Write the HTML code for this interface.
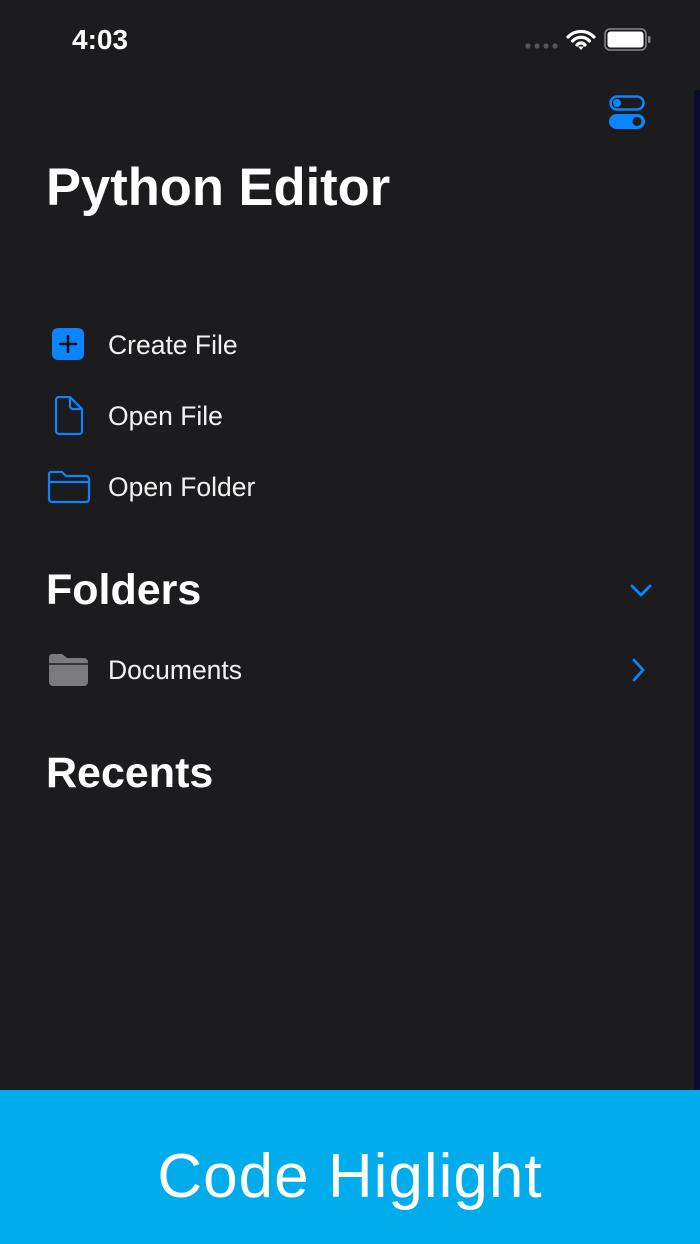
<!DOCTYPE html>
<html><head><meta charset="utf-8"><style>
*{margin:0;padding:0;box-sizing:border-box}
body{width:700px;height:1244px;background:#1c1c1e;position:relative;overflow:hidden;font-family:"Liberation Sans",sans-serif;color:#fff}
.strip{position:absolute;left:694px;top:90px;width:6px;height:1000px;background:#0b0a33}
.t{position:absolute;white-space:nowrap}
.item{position:absolute;left:108px;font-size:26.5px;color:#f2f2f2}
.h{position:absolute;left:46px;font-weight:bold;font-size:43px}
.banner{position:absolute;left:0;top:1090px;width:700px;height:154px;background:#00aceb;text-align:center;font-size:62px;padding-top:50px;line-height:74px;color:#fff;letter-spacing:1px}
svg{position:absolute}
</style></head><body>
<div class="strip"></div>
<div class="t" style="left:72px;top:24px;font-size:28px;font-weight:bold">4:03</div>
<svg style="left:525px;top:43px" width="34" height="6"><circle cx="3" cy="3" r="2.6" fill="#555"/><circle cx="12" cy="3" r="2.6" fill="#555"/><circle cx="21" cy="3" r="2.6" fill="#555"/><circle cx="30" cy="3" r="2.6" fill="#555"/></svg>
<svg style="left:566px;top:28px" width="30" height="22" viewBox="0 0 30 22"><path d="M2 9a18 18 0 0 1 26 0M6.5 13a11.5 11.5 0 0 1 17 0M11 17a5 5 0 0 1 8 0" stroke="#fff" stroke-width="3.2" fill="none" stroke-linecap="round"/><path d="M12 18.5L15 22L18 18.5z" fill="#fff"/></svg>
<svg style="left:604px;top:28px" width="48" height="24"><rect x="1" y="1" width="41" height="21" rx="5" fill="none" stroke="#888" stroke-width="1.5"/><rect x="3.5" y="3.5" width="36" height="16" rx="3" fill="#fff"/><rect x="44" y="8" width="2.5" height="7" rx="1" fill="#888"/></svg>
<svg style="left:609px;top:95px" width="36" height="34"><rect x="1.5" y="1.5" width="33" height="13" rx="6.5" fill="none" stroke="#0a84ff" stroke-width="2.5"/><circle cx="8" cy="8" r="4" fill="#0a84ff"/><rect x="0" y="19" width="36" height="15" rx="7.5" fill="#0a84ff"/><circle cx="28" cy="26.5" r="4.5" fill="#1c1c1e"/></svg>
<div class="t" style="left:46px;top:157px;font-size:52.5px;font-weight:bold">Python Editor</div>
<svg style="left:52px;top:328px" width="32" height="32"><rect width="32" height="32" rx="6" fill="#0a84ff"/><path d="M16 8v16M8 16h16" stroke="#111" stroke-width="2.6" stroke-linecap="round"/></svg>
<div class="item" style="top:330px">Create File</div>
<svg style="left:53px;top:396px" width="32" height="40"><path d="M3 4a3 3 0 0 1 3-3h11l12 12v22a3 3 0 0 1-3 3H6a3 3 0 0 1-3-3z" fill="none" stroke="#0a84ff" stroke-width="2.2"/><path d="M17 1v9a3 3 0 0 0 3 3h9" fill="none" stroke="#0a84ff" stroke-width="2.2"/></svg>
<div class="item" style="top:401px">Open File</div>
<svg style="left:47px;top:470px" width="44" height="34"><path d="M2 4a2 2 0 0 1 2-2h11l4 4h20a3 3 0 0 1 3 3v20a3 3 0 0 1-3 3H5a3 3 0 0 1-3-3z" fill="none" stroke="#0a84ff" stroke-width="2.2"/><path d="M2 12h40" stroke="#0a84ff" stroke-width="2.2"/></svg>
<div class="item" style="top:472px">Open Folder</div>
<div class="h" style="top:566px">Folders</div>
<svg style="left:630px;top:584px" width="22" height="14"><path d="M2 2l9 9 9-9" fill="none" stroke="#0a84ff" stroke-width="2.8" stroke-linecap="round" stroke-linejoin="round"/></svg>
<svg style="left:47px;top:653px" width="43" height="34"><path d="M2 4a3 3 0 0 1 3-3h10l5 4h17a4 4 0 0 1 4 4v20a4 4 0 0 1-4 4H6a4 4 0 0 1-4-4z" fill="#7b7b7f"/><path d="M2 11h41" stroke="#1c1c1e" stroke-width="1.5"/></svg>
<div class="item" style="top:655px">Documents</div>
<svg style="left:631px;top:658px" width="14" height="24"><path d="M3 2l9 10-9 10" fill="none" stroke="#0a84ff" stroke-width="2.8" stroke-linecap="round" stroke-linejoin="round"/></svg>
<div class="h" style="top:749px">Recents</div>
<div class="banner">Code Higlight</div>
</body></html>
